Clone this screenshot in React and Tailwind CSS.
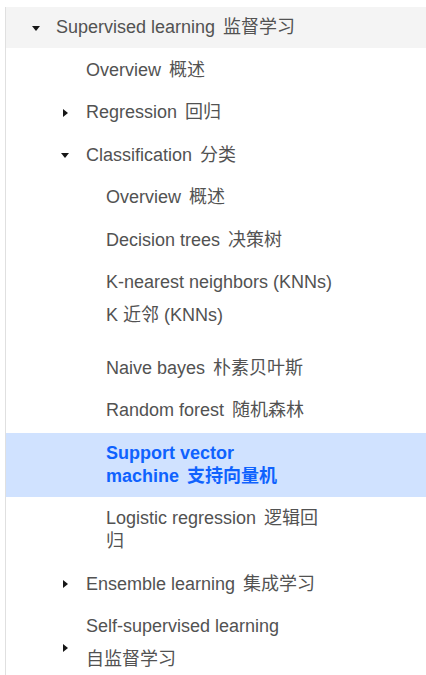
import React from "react";

const FONT = { fontFamily: '"Liberation Sans", "Noto Sans CJK SC", sans-serif' };

function CaretDown() {
  return (
    <svg width="16" height="16" viewBox="0 0 32 32" className="shrink-0" fill="#161616">
      <path d="M24 12l-8 10-8-10z" />
    </svg>
  );
}

function CaretRight() {
  return (
    <svg width="16" height="16" viewBox="0 0 32 32" className="shrink-0" fill="#161616">
      <path d="M12 8l10 8-10 8z" />
    </svg>
  );
}

function Label({ en, zh }) {
  return (
    <span className="whitespace-nowrap">
      {en}
      <span className="ml-[8px]">{zh}</span>
    </span>
  );
}

export default function App() {
  return (
    <div className="w-[426px] h-[675px] overflow-hidden bg-white pt-[7px]" style={FONT}>
      <div className="ml-[5px] border-l border-[#e0e0e0] h-full flex flex-col gap-[1.5px] text-[18px] leading-[23px] text-[#525252]">
        <div className="flex items-center gap-[12px] bg-[#f4f4f4] pl-[22px] py-[9px]">
          <CaretDown />
          <Label en="Supervised learning" zh="监督学习" />
        </div>

        <div className="pl-[80px] py-[9px]">
          <Label en="Overview" zh="概述" />
        </div>

        <div className="flex items-center gap-[13px] pl-[51px] py-[9px]">
          <CaretRight />
          <Label en="Regression" zh="回归" />
        </div>

        <div className="flex items-center gap-[13px] pl-[51px] py-[9px]">
          <CaretDown />
          <Label en="Classification" zh="分类" />
        </div>

        <div className="pl-[100px] py-[9px]">
          <Label en="Overview" zh="概述" />
        </div>

        <div className="pl-[100px] py-[9px]">
          <Label en="Decision trees" zh="决策树" />
        </div>

        <div className="pl-[100px] pt-[9px] pb-[9px]">
          <div className="whitespace-nowrap">K-nearest neighbors (KNNs)</div>
          <div className="leading-[43px] whitespace-nowrap">K 近邻 (KNNs)</div>
        </div>

        <div className="pl-[100px] py-[9px]">
          <Label en="Naive bayes" zh="朴素贝叶斯" />
        </div>

        <div className="pl-[100px] py-[9px]">
          <Label en="Random forest" zh="随机森林" />
        </div>

        <div className="pl-[100px] py-[9px] bg-[#d0e2ff] text-[#0f62fe] font-bold">
          <div className="whitespace-nowrap">Support vector</div>
          <div className="whitespace-nowrap">
            machine<span className="ml-[8px]">支持向量机</span>
          </div>
        </div>

        <div className="pl-[100px] py-[9px]">
          <div className="whitespace-nowrap">
            Logistic regression<span className="ml-[8px]">逻辑回</span>
          </div>
          <div>归</div>
        </div>

        <div className="flex items-center gap-[13px] pl-[51px] py-[9px]">
          <CaretRight />
          <Label en="Ensemble learning" zh="集成学习" />
        </div>

        <div className="flex items-center gap-[13px] pl-[51px] pt-[9px] pb-[9px]">
          <CaretRight />
          <div>
            <div className="whitespace-nowrap">Self-supervised learning</div>
            <div className="leading-[43px] whitespace-nowrap">自监督学习</div>
          </div>
        </div>
      </div>
    </div>
  );
}
